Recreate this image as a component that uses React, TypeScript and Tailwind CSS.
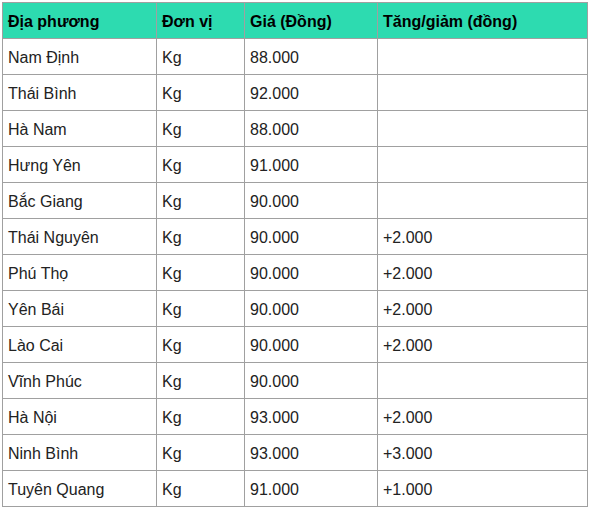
import React from "react";

const rows: [string, string, string, string][] = [
  ["Nam Định", "Kg", "88.000", ""],
  ["Thái Bình", "Kg", "92.000", ""],
  ["Hà Nam", "Kg", "88.000", ""],
  ["Hưng Yên", "Kg", "91.000", ""],
  ["Bắc Giang", "Kg", "90.000", ""],
  ["Thái Nguyên", "Kg", "90.000", "+2.000"],
  ["Phú Thọ", "Kg", "90.000", "+2.000"],
  ["Yên Bái", "Kg", "90.000", "+2.000"],
  ["Lào Cai", "Kg", "90.000", "+2.000"],
  ["Vĩnh Phúc", "Kg", "90.000", ""],
  ["Hà Nội", "Kg", "93.000", "+2.000"],
  ["Ninh Bình", "Kg", "93.000", "+3.000"],
  ["Tuyên Quang", "Kg", "91.000", "+1.000"],
];

export default function App() {
  const cell = "border border-[#a0a0a0] h-[36px] px-[5px] pt-[2px] pb-0 align-middle text-left";
  return (
    <div className="bg-white w-[590px] h-[511px] pt-[2px] pl-[2px]" style={{ fontFamily: '"Liberation Sans", Arial, sans-serif' }}>
      <table className="border-collapse table-fixed w-[585px] text-[16px] text-[#222]">
        <colgroup>
          <col className="w-[154px]" />
          <col className="w-[88px]" />
          <col className="w-[133px]" />
          <col className="w-[210px]" />
        </colgroup>
        <thead>
          <tr className="bg-[#2ddbb0]">
            <th className={`${cell} font-bold text-black`}>Địa phương</th>
            <th className={`${cell} font-bold text-black`}>Đơn vị</th>
            <th className={`${cell} font-bold text-black`}>Giá (Đồng)</th>
            <th className={`${cell} font-bold text-black`}>Tăng/giảm (đồng)</th>
          </tr>
        </thead>
        <tbody>
          {rows.map((r, i) => (
            <tr key={i}>
              {r.map((c, j) => (
                <td key={j} className={cell}>{c}</td>
              ))}
            </tr>
          ))}
        </tbody>
      </table>
    </div>
  );
}
